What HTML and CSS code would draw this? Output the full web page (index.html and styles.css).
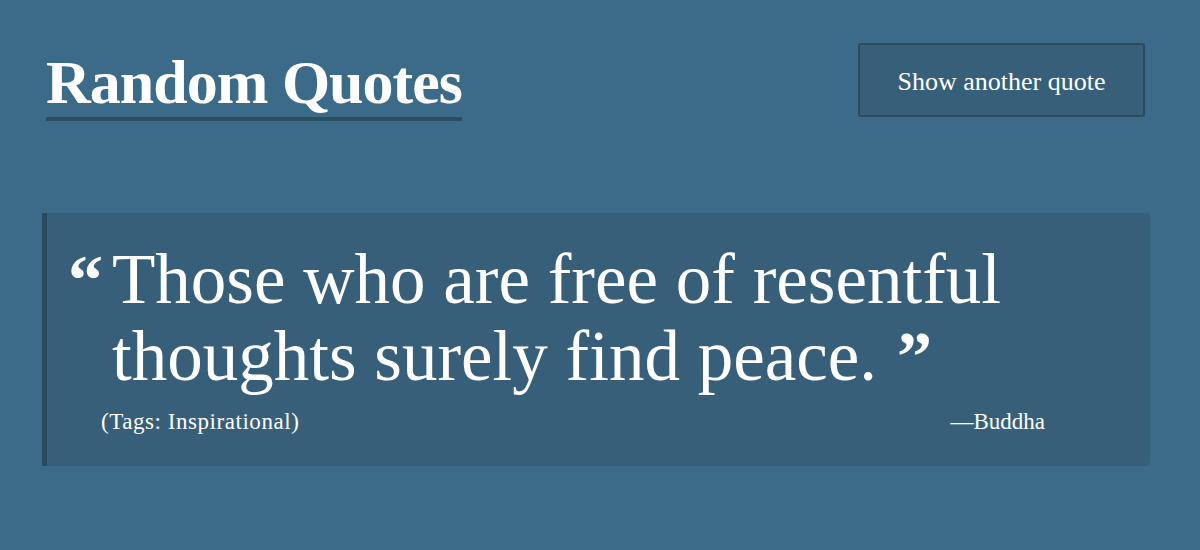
FILE: index.html
```html
<!DOCTYPE html>
<html lang="en">
<head>
<meta charset="utf-8">
<title>Random Quotes</title>
<link rel="stylesheet" href="styles.css">
</head>
<body>
<div class="page">
  <header class="header">
    <h1 class="title">Random Quotes</h1>
    <button class="btn" type="button">Show another quote</button>
  </header>
  <blockquote class="card">
    <div class="quote">
      <span class="mark open">&ldquo;</span>
      <p class="text">Those who are free of resentful thoughts surely find peace.<span class="mark close">&rdquo;</span></p>
    </div>
    <div class="meta">
      <span class="tags">(Tags: Inspirational)</span>
      <span class="author">&mdash;Buddha</span>
    </div>
  </blockquote>
</div>
</body>
</html>
```
FILE: styles.css
```css
html, body {
  margin: 0;
  padding: 0;
}
body {
  background: #3c6b8a;
  color: #fff;
  font-family: "Liberation Serif", "Times New Roman", serif;
  height: 550px;
  overflow: hidden;
}
.page {
  padding: 43px 50px 0 42px;
}
.header {
  display: flex;
  justify-content: space-between;
  align-items: flex-start;
  padding-left: 4px;
  padding-right: 5px;
}
.title {
  margin: 4px 0 0 0;
  font-size: 62px;
  font-weight: bold;
  line-height: 70px;
  letter-spacing: -1px;
  border-bottom: 4px solid #2d4d62;
}
.btn {
  width: 287px;
  height: 74px;
  background: #375f79;
  color: #fff;
  border: 2px solid #2b4a5e;
  border-radius: 3px;
  font-family: inherit;
  font-size: 26px;
  padding: 4px 0 0 0;
}
.card {
  margin: 92px 0 0 0;
  background: #375f79;
  border-left: 5px solid #2a4a5e;
  border-radius: 0 4px 4px 0;
  padding: 28px 105px 31px 21px;
}
.quote {
  display: flex;
  align-items: flex-start;
}
.mark {
  font-size: 70px;
  line-height: 1;
  font-weight: bold;
}
.open {
  width: 44px;
  flex: none;
  padding-top: 4px;
}
.close {
  display: inline-block;
  vertical-align: top;
  position: relative;
  top: 4px;
  margin-left: 20px;
}
.text {
  margin: 0;
  font-size: 71px;
  line-height: 77px;
}
.meta {
  display: flex;
  justify-content: space-between;
  padding-left: 33px;
  margin-top: 14px;
  font-size: 23px;
  line-height: 26px;
}
.tags {
  letter-spacing: 0.55px;
}
```
